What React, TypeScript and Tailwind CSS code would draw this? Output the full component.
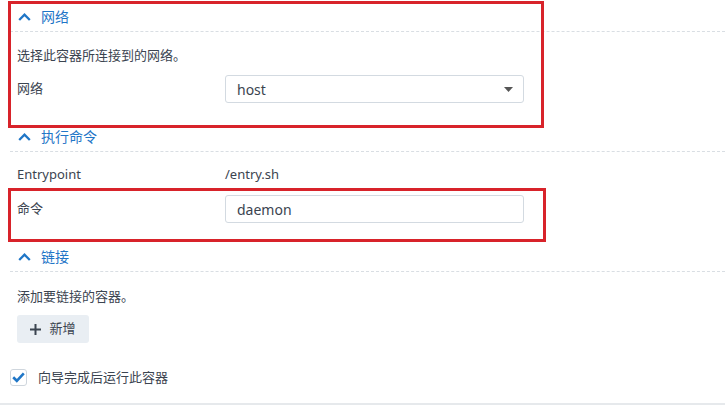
import React from "react";

function Chevron() {
  return (
    <svg width="13" height="8" viewBox="0 0 13 8" className="shrink-0">
      <path d="M1.2 7 L6.5 1.7 L11.8 7" fill="none" stroke="#1f76c7" strokeWidth="2.3" />
    </svg>
  );
}

function Header({ title }: { title: string }) {
  return (
    <div className="ml-[10px] h-[30px] flex items-center gap-[10px] pl-[8px] border-b border-dashed border-[#d9dee3]">
      <Chevron />
      <span className="text-[14px] text-[#1f76c7]">{title}</span>
    </div>
  );
}

export default function App() {
  return (
    <div
      className="relative w-[725px] h-[405px] bg-white overflow-hidden text-[13px] text-[#3b4450]"
      style={{ fontFamily: '"Noto Sans", "Noto Sans CJK SC", sans-serif' }}
    >
      <div className="pt-[2px]">
        <Header title="网络" />
        <div className="pl-[17px] mt-[13px] h-[20px] leading-[20px]">选择此容器所连接到的网络。</div>
        <div className="flex items-center mt-[10px] h-[28px]">
          <div className="pl-[17px] w-[225px]">网络</div>
          <div className="w-[299px] h-[28px] border border-[#d3dae1] rounded-[3px] flex items-center justify-between pl-[11px] pr-[10px]">
            <span className="text-[14px]">host</span>
            <svg width="9" height="5" viewBox="0 0 9 5">
              <path d="M0 0 H9 L4.5 5 Z" fill="#555" />
            </svg>
          </div>
        </div>

        <div className="mt-[19px]">
          <Header title="执行命令" />
        </div>
        <div className="flex items-center mt-[13px] h-[20px]">
          <div className="pl-[17px] w-[225px]">Entrypoint</div>
          <div>/entry.sh</div>
        </div>
        <div className="flex items-center mt-[10px] h-[28px]">
          <div className="pl-[17px] w-[225px]">命令</div>
          <div className="w-[299px] h-[28px] border border-[#d3dae1] rounded-[3px] flex items-center pl-[11px]">
            <span className="text-[14px]">daemon</span>
          </div>
        </div>

        <div className="mt-[19px]">
          <Header title="链接" />
        </div>
        <div className="pl-[17px] mt-[14px] h-[20px] leading-[20px]">添加要链接的容器。</div>
        <div className="pl-[17px] mt-[9px]">
          <button className="w-[72px] h-[28px] rounded-[3px] bg-[#e9eef3] flex items-center justify-center gap-[8px] text-[13px] text-[#3b4450]">
            <svg width="11" height="11" viewBox="0 0 11 11">
              <path d="M5.5 0 V11 M0 5.5 H11" stroke="#3b4450" strokeWidth="2" />
            </svg>
            <span>新增</span>
          </button>
        </div>
        <div className="flex items-center mt-[26px] pl-[10px] gap-[11px] h-[17px]">
          <div className="w-[17px] h-[17px] border border-[#cfd6dd] rounded-[3px] flex items-center justify-center">
            <svg width="13" height="11" viewBox="0 0 13 11">
              <path d="M1.2 5.3 L4.8 8.8 L11.8 1.4" fill="none" stroke="#1f76c7" strokeWidth="2.6" />
            </svg>
          </div>
          <span>向导完成后运行此容器</span>
        </div>
      </div>
      <div className="absolute left-0 right-0 bottom-0 h-[2px] bg-[#e6e9ec]" />

      {/* red annotation boxes */}
      <div className="absolute left-[8px] top-[1px] w-[536px] h-[127px] border-[3px] border-[#d8232a]" />
      <div className="absolute left-[8px] top-[188px] w-[538px] h-[54px] border-[3px] border-[#d8232a]" />
    </div>
  );
}
